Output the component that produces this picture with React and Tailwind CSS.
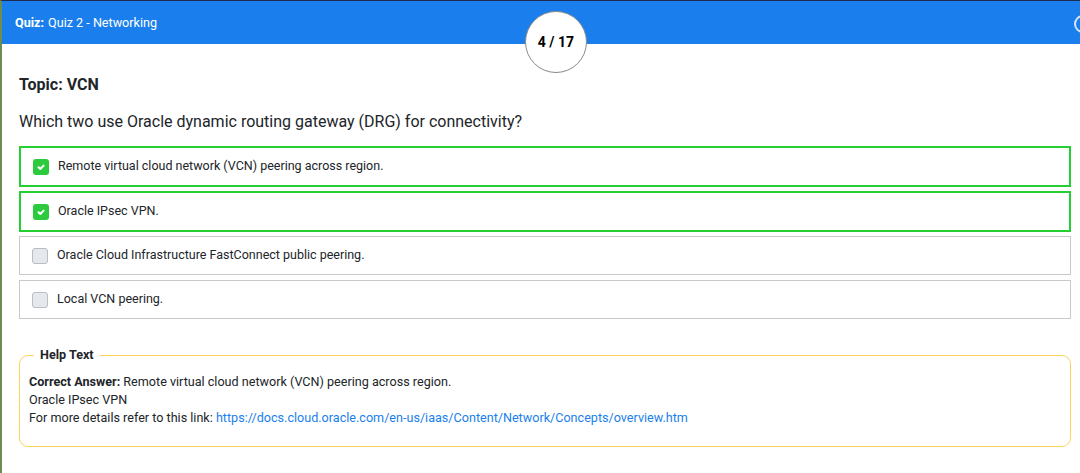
import React from 'react';

const options = [
  { text: 'Remote virtual cloud network (VCN) peering across region.', checked: true },
  { text: 'Oracle IPsec VPN.', checked: true },
  { text: 'Oracle Cloud Infrastructure FastConnect public peering.', checked: false },
  { text: 'Local VCN peering.', checked: false },
];

const Check = ({ on }) =>
  on ? (
    <span className="w-[16px] h-[16px] rounded-[3px] bg-[#2ccb3d] flex items-center justify-center shrink-0">
      <svg width="10" height="10" viewBox="0 0 10 10">
        <path d="M2.5 5.3 L4.3 7 L7.6 3.6" stroke="white" strokeWidth="2" fill="none" strokeLinecap="round" strokeLinejoin="round" />
      </svg>
    </span>
  ) : (
    <span className="w-[16px] h-[16px] rounded-[3px] bg-[#e5e8ec] border border-[#b8bec5] shrink-0" />
  );

export default function App() {
  return (
    <div className="w-[1080px] h-[473px] bg-white overflow-hidden border-l-2 border-l-[#6d8c4f] border-t border-t-[#1f2a4f] font-['Roboto',sans-serif] text-[#212529]">
      <header className="relative h-[43px] bg-[#1a7fec] flex items-center pl-[13px] pt-[2px] text-[12.6px] text-white">
        <span className="font-bold mr-1">Quiz:</span>
        <span>Quiz 2 - Networking</span>
        <div className="absolute left-[523px] top-[10px] w-[62px] h-[62px] rounded-full bg-white border border-[#8a8a8a] flex items-center justify-center text-[14px] font-bold text-black">
          4 / 17
        </div>
        <div className="absolute right-[-12px] top-[14px] w-[18px] h-[18px] rounded-full border-2 border-white/80" />
      </header>

      <main className="pl-[17px] pr-[9px]">
        <h2 className="mt-[31px] text-[16px] font-bold leading-[20px]">Topic: VCN</h2>
        <p className="mt-[17px] text-[16px] leading-[20px]">Which two use Oracle dynamic routing gateway (DRG) for connectivity?</p>

        <div className="mt-[14px] flex flex-col gap-[4px]">
          {options.map((o, i) => (
            <div
              key={o.text}
              className={
                o.checked
                  ? 'h-[41px] border-2 border-[#24cf33] flex items-center gap-[9px] pl-[12px] text-[12.5px]'
                  : i === 3
                  ? 'mt-[1px] h-[39px] border border-[#c9c9c9] flex items-center gap-[9px] pl-[12px] text-[12.5px]'
                  : 'h-[39px] border border-[#c9c9c9] flex items-center gap-[9px] pl-[12px] text-[12.5px]'
              }
            >
              <Check on={o.checked} />
              <span>{o.text}</span>
            </div>
          ))}
        </div>

        <fieldset className="mt-[27px] border border-[#fcd45c] rounded-[9px] px-[9px] pb-[19px] pt-[9px] text-[12.6px] leading-[18px]">
          <legend className="ml-[5px] px-[6px] font-bold">Help Text</legend>
          <div>
            <span className="font-bold">Correct Answer:</span> Remote virtual cloud network (VCN) peering across region.
          </div>
          <div>Oracle IPsec VPN</div>
          <div>
            For more details refer to this link:{' '}
            <a href="#" className="text-[#1a7fec]">https://docs.cloud.oracle.com/en-us/iaas/Content/Network/Concepts/overview.htm</a>
          </div>
        </fieldset>
      </main>
    </div>
  );
}
